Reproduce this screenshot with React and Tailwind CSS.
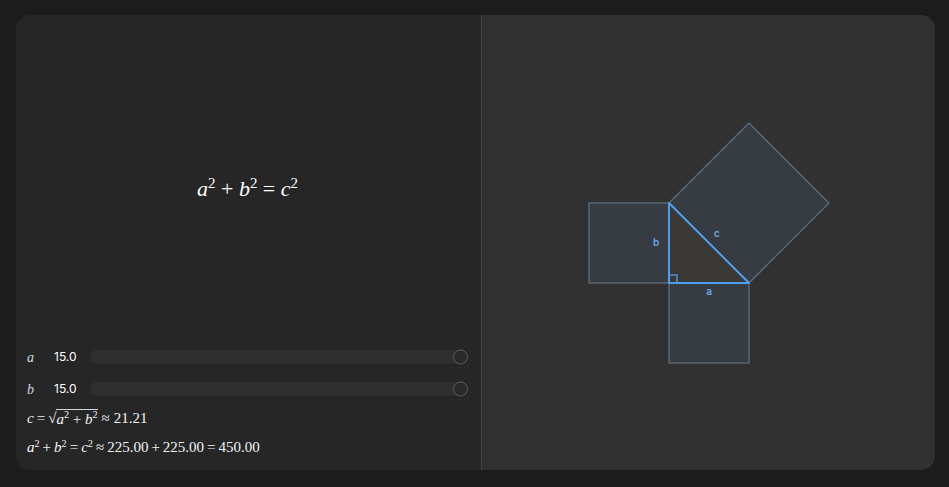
import React from 'react';

const serif = { fontFamily: '"Liberation Serif", "DejaVu Serif", serif' };

const Sup = ({ children }) => <span className="text-[0.68em] not-italic relative -top-[0.5em]">{children}</span>;

const SliderRow = ({ name, value }) => (
  <div className="flex items-center h-8">
    <span className="w-[27px] text-[14px] italic text-gray-300 font-['Liberation_Serif',serif]">{name}</span>
    <span className="w-9 text-[12px] text-white font-['Inter',sans-serif]">{value}</span>
    <div className="relative flex-1 h-[14px] rounded-full bg-[#2f2f2f]">
      <div className="absolute right-0 top-1/2 -translate-y-1/2 w-[15px] h-[15px] rounded-full border border-[#5c5c5c] bg-[#2a2a2a]"></div>
    </div>
  </div>
);

const App = () => {
  return (
    <div className="w-[949px] h-[487px] bg-[#1c1c1c] pt-[15px] pl-4 pr-[14px]">
      <div className="h-[455px] flex rounded-[14px] overflow-hidden bg-[#262626]">
        {/* left: formula + controls */}
        <div className="w-[466px] flex flex-col pl-[11px] pr-[13px] pb-[8px] border-r border-[#444]">
          <div className="flex-1 flex items-center justify-center pt-5">
            <div className="text-[22px] text-white italic" style={serif}>
              a<Sup>2</Sup> <span className="not-italic">+</span> b<Sup>2</Sup> <span className="not-italic">=</span> c<Sup>2</Sup>
            </div>
          </div>
          <div className="flex flex-col">
            <SliderRow name="a" value="15.0" />
            <SliderRow name="b" value="15.0" />
            <div className="h-[27px] flex items-center text-[15px] text-gray-100" style={serif}>
              <span className="italic">c</span>
              <span className="mx-[3px]">=</span>
              <span>√</span>
              <span className="border-t border-gray-300 leading-[16px] italic pt-[1px]">
                a<Sup>2</Sup> <span className="not-italic">+</span> b<Sup>2</Sup>
              </span>
              <span className="mx-[4px]">≈</span>
              <span>21.21</span>
            </div>
            <div className="h-[30px] flex items-center text-[15px] text-gray-100" style={serif}>
              <span className="italic">a<Sup>2</Sup></span>
              <span className="mx-[3px]">+</span>
              <span className="italic">b<Sup>2</Sup></span>
              <span className="mx-[3px]">=</span>
              <span className="italic">c<Sup>2</Sup></span>
              <span className="mx-[3px]">≈</span>
              <span>225.00</span>
              <span className="mx-[3px]">+</span>
              <span>225.00</span>
              <span className="mx-[3px]">=</span>
              <span>450.00</span>
            </div>
          </div>
        </div>

        {/* right: diagram */}
        <div className="flex-1 bg-[#313131]">
          <svg width="453" height="455" viewBox="0 0 453 455">
            <g fill="#3a4048" fillOpacity="0.8" stroke="#5b6c7a" strokeWidth="1.3">
              <rect x="107" y="188" width="80" height="80" />
              <rect x="187" y="268" width="80" height="80" />
              <polygon points="187,188 267,108 347,188 267,268" />
            </g>
            <polygon points="187,188 187,268 267,268" fill="#3a3836" stroke="#4f9ff0" strokeWidth="2" strokeLinejoin="round" />
            <rect x="187" y="260" width="8" height="8" fill="none" stroke="#4f9ff0" strokeWidth="1.3" />
            <g fill="#6aa8ea" fontSize="10" fontWeight="600" fontFamily="Inter, sans-serif" textAnchor="middle">
              <text x="174" y="231">b</text>
              <text x="235" y="222">c</text>
              <text x="227" y="280">a</text>
            </g>
          </svg>
        </div>
      </div>
    </div>
  );
};

export default App;
